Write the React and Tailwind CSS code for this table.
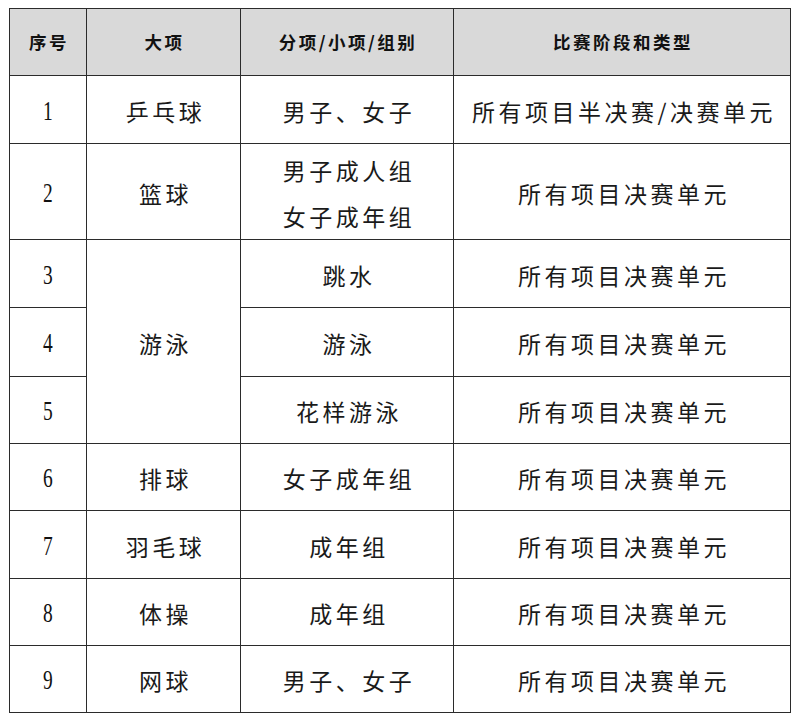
import React from "react";

const cjk = { fontFamily: '"Noto Sans CJK SC", "Noto Sans", sans-serif' };
const num = { fontFamily: '"Liberation Serif", "Times New Roman", serif' };

function H({ children }) {
  return (
    <div
      className="bg-[#d9d9d9] flex items-center justify-center text-[17.5px] font-bold text-[#111] tracking-[2.5px] pl-[2px] pt-[1px]"
      style={cjk}
    >
      {children}
    </div>
  );
}

function N({ children }) {
  return (
    <div className="bg-white flex items-center justify-center text-[#111] pt-[3px]">
      <span className="text-[27px] leading-none inline-block scale-x-[0.72]" style={num}>
        {children}
      </span>
    </div>
  );
}

function C({ children, className = "" }) {
  return (
    <div
      className={
        "bg-white flex flex-col items-center justify-center text-[23px] text-[#1a1a1a] tracking-[3.5px] pl-[4px] pt-[3px] " +
        className
      }
      style={cjk}
    >
      {children}
    </div>
  );
}

export default function App() {
  return (
    <div className="w-[801px] h-[723px] bg-white pt-[8px] pl-[9px]">
      <div className="grid grid-cols-[76px_153px_212px_336px] grid-rows-[66px_67px_95px_67px_68px_66px_66px_67px_66px_66px] gap-px p-px bg-[#2b2b2b] w-max">
        <H>序号</H>
        <H>大项</H>
        <H>分项/小项/组别</H>
        <H>比赛阶段和类型</H>

        <N>1</N>
        <C>乒乓球</C>
        <C>男子、女子</C>
        <C className="tracking-[2.5px]">所有项目半决赛/决赛单元</C>

        <N>2</N>
        <C>篮球</C>
        <C className="leading-[46px]">
          <span>男子成人组</span>
          <span>女子成年组</span>
        </C>
        <C>所有项目决赛单元</C>

        <N>3</N>
        <C className="row-span-3">游泳</C>
        <C>跳水</C>
        <C>所有项目决赛单元</C>

        <N>4</N>
        <C>游泳</C>
        <C>所有项目决赛单元</C>

        <N>5</N>
        <C>花样游泳</C>
        <C>所有项目决赛单元</C>

        <N>6</N>
        <C>排球</C>
        <C>女子成年组</C>
        <C>所有项目决赛单元</C>

        <N>7</N>
        <C>羽毛球</C>
        <C>成年组</C>
        <C>所有项目决赛单元</C>

        <N>8</N>
        <C>体操</C>
        <C>成年组</C>
        <C>所有项目决赛单元</C>

        <N>9</N>
        <C>网球</C>
        <C>男子、女子</C>
        <C>所有项目决赛单元</C>
      </div>
    </div>
  );
}
